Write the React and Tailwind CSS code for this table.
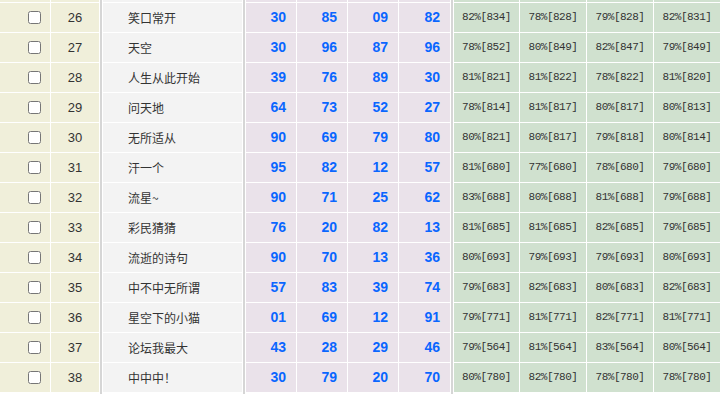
import React from 'react';

const rows = [
  ['26', '笑口常开', ['30', '85', '09', '82'], ['82%[834]', '78%[828]', '79%[828]', '82%[831]']],
  ['27', '天空', ['30', '96', '87', '96'], ['78%[852]', '80%[849]', '82%[847]', '79%[849]']],
  ['28', '人生从此开始', ['39', '76', '89', '30'], ['81%[821]', '81%[822]', '78%[822]', '81%[820]']],
  ['29', '问天地', ['64', '73', '52', '27'], ['78%[814]', '81%[817]', '80%[817]', '80%[813]']],
  ['30', '无所适从', ['90', '69', '79', '80'], ['80%[821]', '80%[817]', '79%[818]', '80%[814]']],
  ['31', '汗一个', ['95', '82', '12', '57'], ['81%[680]', '77%[680]', '78%[680]', '79%[680]']],
  ['32', '流星~', ['90', '71', '25', '62'], ['83%[688]', '80%[688]', '81%[688]', '79%[688]']],
  ['33', '彩民猜猜', ['76', '20', '82', '13'], ['81%[685]', '81%[685]', '82%[685]', '79%[685]']],
  ['34', '流逝的诗句', ['90', '70', '13', '36'], ['80%[693]', '79%[693]', '79%[693]', '80%[693]']],
  ['35', '中不中无所谓', ['57', '83', '39', '74'], ['79%[683]', '82%[683]', '80%[683]', '82%[683]']],
  ['36', '星空下的小猫', ['01', '69', '12', '91'], ['79%[771]', '81%[771]', '82%[771]', '81%[771]']],
  ['37', '论坛我最大', ['43', '28', '29', '46'], ['79%[564]', '81%[564]', '83%[564]', '80%[564]']],
  ['38', '中中中！', ['30', '79', '20', '70'], ['80%[780]', '82%[780]', '78%[780]', '78%[780]']],
];

const numW = ['w-[50px]', 'w-[50px]', 'w-[50px]', 'w-[51px]'];
const pctW = ['w-[65px]', 'w-[66px]', 'w-[66px]', 'w-[66px]'];

// vertical gray rule with a white pixel on each side
function Sep() {
  return <div className="mx-px w-[2px] shrink-0 bg-[#d6d6d6]" />;
}

export default function App() {
  return (
    <div className="flex w-[722px] h-[394px] overflow-hidden bg-white text-[#333] font-['Liberation_Sans','Noto_Sans_CJK_SC',sans-serif]">
      {/* checkbox + id */}
      <div className="flex flex-col gap-px shrink-0">
        <div className="flex gap-px h-[2px]">
          <div className="w-[50px] bg-[#f0efda]" />
          <div className="w-[48px] bg-[#f0efda]" />
        </div>
        {rows.map(([id]) => (
          <div key={id} className="flex gap-px h-[29px]">
            <div className="w-[50px] bg-[#f0efda] flex items-center justify-end pr-[9px]">
              <input type="checkbox" className="m-0 w-[13px] h-[13px]" />
            </div>
            <div className="w-[48px] bg-[#f0efda] flex items-center justify-center text-[13px]">{id}</div>
          </div>
        ))}
      </div>

      <Sep />

      {/* names */}
      <div className="flex flex-col gap-px shrink-0 w-[139px]">
        <div className="h-[2px] bg-[#f3f3f3]" />
        {rows.map(([id, name]) => (
          <div key={id} className="h-[29px] bg-[#f3f3f3] flex items-center pl-[25px] text-[12px] font-['Noto_Sans_CJK_SC',sans-serif]">
            {name}
          </div>
        ))}
      </div>

      <Sep />

      {/* numbers */}
      <div className="flex flex-col gap-px shrink-0">
        <div className="flex gap-px h-[2px]">
          {numW.map((w, i) => <div key={i} className={`${w} bg-[#eae2ea]`} />)}
        </div>
        {rows.map(([id, , nums]) => (
          <div key={id} className="flex gap-px h-[29px]">
            {nums.map((n, i) => (
              <div key={i} className={`${numW[i]} bg-[#eae2ea] flex items-center justify-end pr-[10px] text-[14px] font-bold text-[#0a66ff]`}>
                {n}
              </div>
            ))}
          </div>
        ))}
      </div>

      <Sep />

      {/* percentages */}
      <div className="flex flex-col gap-px shrink-0">
        <div className="flex gap-px h-[2px]">
          {pctW.map((w, i) => <div key={i} className={`${w} bg-[#d0e1cf]`} />)}
        </div>
        {rows.map(([id, , , pcts]) => (
          <div key={id} className="flex gap-px h-[29px]">
            {pcts.map((p, i) => (
              <div key={i} className={`${pctW[i]} bg-[#d0e1cf] flex items-center justify-center text-[11px] tracking-[-0.5px] font-['Liberation_Mono',monospace]`}>
                {p}
              </div>
            ))}
          </div>
        ))}
      </div>
    </div>
  );
}
